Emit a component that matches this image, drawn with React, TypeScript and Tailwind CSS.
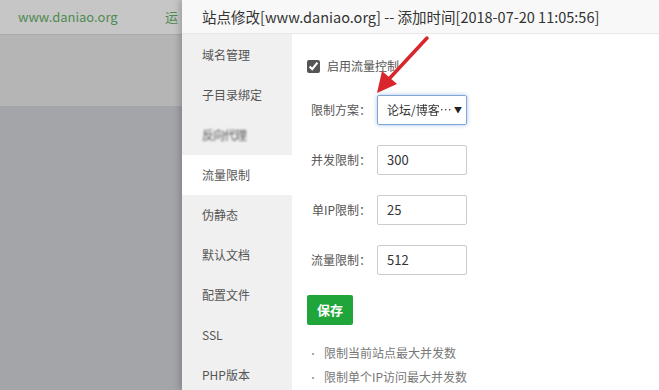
import React from "react";

const font = { fontFamily: '"Noto Sans CJK SC", "Noto Sans", sans-serif' };

const menu = ["域名管理", "子目录绑定", "反向代理", "流量限制", "伪静态", "默认文档", "配置文件", "SSL", "PHP版本"];

function Field({ label, value }: { label: string; value: string }) {
  return (
    <div className="flex items-center h-[30px]">
      <span className="w-[70px] pr-[6px] text-right text-[12px] text-[#555]">{label}</span>
      <div className="w-[90px] h-[30px] border border-[#ccc] rounded-[2px] flex items-center pl-[9px] text-[13px] text-[#333]">
        {value}
      </div>
    </div>
  );
}

export default function App() {
  return (
    <div className="relative w-[659px] h-[390px] overflow-hidden flex" style={font}>
      {/* backdrop */}
      <div className="w-[182px] flex flex-col bg-[#a4a5a9]">
        <div className="h-[35px] bg-[#c6c6c6] border-b border-[#a9a9a9] flex items-center pl-[18px] pr-1 justify-between">
          <span className="text-[13px] text-[#4f8a52]">www.daniao.org</span>
          <span className="text-[13px] text-[#4f8a52]">运</span>
        </div>
        <div className="h-[71px] bg-[#b5b5b5]" />
        <div className="flex-1 bg-[#a4a5a9]" />
      </div>

      {/* dialog */}
      <div className="flex-1 flex flex-col bg-white shadow-[-3px_0_6px_rgba(0,0,0,0.18)]">
        <div className="h-[34px] shrink-0 bg-[#f8f8f8] border-b border-[#e8e8e8] flex items-center pl-[20px] text-[14.5px] text-[#333] whitespace-nowrap">
          站点修改[www.daniao.org] -- 添加时间[2018-07-20 11:05:56]
        </div>
        <div className="flex flex-1">
          <div className="w-[110px] bg-[#f0f0f0] flex flex-col pt-px">
            {menu.map((m) => (
              <div
                key={m}
                className={`h-[40px] shrink-0 flex items-center pl-[20px] text-[12px] text-[#555] ${
                  m === "流量限制" ? "bg-white" : ""
                }`}
              >
                <span className={m === "反向代理" ? "blur-[0.8px] tracking-[-1px]" : ""}>{m}</span>
              </div>
            ))}
          </div>

          <div className="flex-1 flex flex-col pl-[15px] pt-[24px]">
            <label className="flex items-center gap-[7px] h-[16px] text-[12px] text-[#555]">
              <input type="checkbox" defaultChecked className="w-[13px] h-[13px] m-0 accent-[#555]" />
              启用流量控制
            </label>

            <div className="flex flex-col gap-[20px] mt-[21px]">
              <div className="flex items-center h-[30px]">
                <span className="w-[70px] pr-[6px] text-right text-[12px] text-[#555]">限制方案：</span>
                <div className="w-[90px] h-[30px] border border-[#7ea6d6] rounded-[2px] shadow-[0_0_4px_rgba(80,130,200,0.5)] flex items-center justify-between pl-[9px] pr-[4px] text-[12px] text-[#333]">
                  <span className="whitespace-nowrap overflow-hidden">论坛/<span className="blur-[0.6px]">博客…</span></span>
                  <span className="text-[8px] text-[#222]">▼</span>
                </div>
              </div>
              <Field label="并发限制：" value="300" />
              <Field label="单IP限制：" value="25" />
              <Field label="流量限制：" value="512" />
            </div>

            <button className="mt-[20px] w-[46px] h-[30px] rounded-[2px] bg-[#20a53a] text-white text-[13px] font-bold flex items-center justify-center">
              保存
            </button>

            <ul className="mt-[19px] flex flex-col gap-[6px] text-[12px] text-[#777]">
              <li className="flex items-center h-[18px]">
                <span className="w-[17px] pl-px text-[10px] text-[#999]">•</span>限制当前站点最大并发数
              </li>
              <li className="flex items-center h-[18px]">
                <span className="w-[17px] pl-px text-[10px] text-[#999]">•</span>限制单个IP访问最大并发数
              </li>
            </ul>
          </div>
        </div>
      </div>

      {/* red annotation arrow */}
      <svg className="absolute left-0 top-0 pointer-events-none" width="659" height="390">
        <line x1="427" y1="38" x2="388" y2="80" stroke="#d8262c" strokeWidth="3.5" strokeLinecap="round" />
        <polygon points="377,93 382,71 397,84" fill="#d8262c" />
      </svg>
    </div>
  );
}
